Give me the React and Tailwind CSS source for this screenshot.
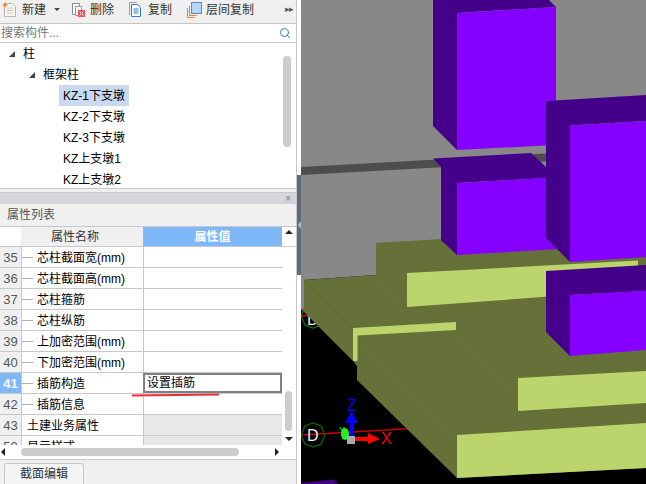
import React from 'react';
import { Search } from 'lucide-react';

const treeItems = ['KZ-1下支墩', 'KZ-2下支墩', 'KZ-3下支墩', 'KZ上支墩1', 'KZ上支墩2'];

const rows = [
  { no: 35, name: '芯柱截面宽(mm)', dash: true },
  { no: 36, name: '芯柱截面高(mm)', dash: true },
  { no: 37, name: '芯柱箍筋', dash: true },
  { no: 38, name: '芯柱纵筋', dash: true },
  { no: 39, name: '上加密范围(mm)', dash: true },
  { no: 40, name: '下加密范围(mm)', dash: true },
  { no: 41, name: '插筋构造', dash: true, active: true, value: '设置插筋' },
  { no: 42, name: '插筋信息', dash: true },
  { no: 43, name: '土建业务属性', muted: true },
  { no: 50, name: '显示样式', muted: true },
];

const NewIcon = () => (
  <svg width="15" height="16" viewBox="0 0 15 16">
    <path d="M2.500 1.500h8l3 3v10h-11z" fill="#f7f6ef" stroke="#b5b5b0" />
    <path d="M5 6h6M5 8.500h6M5 11h6" stroke="#c4c4bd" />
    <path d="M3 0l1 2 2 1-2 1-1 2-1-2-2-1 2-1z" fill="#f08a24" />
  </svg>
);

const DeleteIcon = () => (
  <svg width="15" height="16" viewBox="0 0 15 16">
    <path d="M1.500 1.500h7v11h-7z" fill="#fff" stroke="#8a8a8a" />
    <path d="M4.500 4.500h6v9h-6z" fill="#fff" stroke="#9a9a9a" />
    <rect x="7" y="8" width="7" height="7" fill="#e8505a" />
    <path d="M8.500 9.500l4 4M12.500 9.500l-4 4" stroke="#fff" />
  </svg>
);

const CopyIcon = () => (
  <svg width="15" height="16" viewBox="0 0 15 16">
    <path d="M1.500 13V.5h7" fill="none" stroke="#a0a0a0" />
    <path d="M3.500 2.500h6l3 3v9h-9z" fill="#fff" stroke="#2f7fd0" />
    <path d="M5.500 7h5M5.500 9h5M5.500 11h5" stroke="#2f7fd0" />
  </svg>
);

const LayerIcon = () => (
  <svg width="16" height="16" viewBox="0 0 16 16">
    <path d="M.5 15.500V6M.5 15.500h7" fill="none" stroke="#f08030" />
    <path d="M2.500 13.500V4M2.500 13.500h7" fill="none" stroke="#f08030" />
    <rect x="4.500" y=".5" width="10" height="11" fill="#b9d6f7" stroke="#4a8fd8" />
  </svg>
);

const Triangle = () => (
  <svg width="6" height="6" viewBox="0 0 6 6">
    <polygon points="6,0 6,6 0,6" fill="#444" />
  </svg>
);

const Scene = () => (
  <svg className="shrink-0" width="345" height="484" viewBox="301 0 345 484">
    <rect x="301" y="0" width="345" height="484" fill="#000" />
    <polygon points="301,0 646,0 646,240 376,243 376,275 304,280 304,312 301,309" fill="#888888" />
    <polygon points="301,167 646,148 646,156 301,175" fill="#4d4d4d" />

    {/* grid axes under the model */}
    <path d="M301 435L420 428" stroke="#c80000" strokeWidth="1.500" />
    <path d="M301 316L320 315" stroke="#e00000" strokeWidth="1.500" />
    <polygon points="313,423 321,426 325,435 321,444 313,447 305,444 301,435 305,426" fill="none" stroke="#0b6a0b" strokeWidth="1.200" />
    <text x="307" y="441" fontSize="16" fill="#eeeeee">D</text>
    <polygon points="313,304 321,307 325,316 321,325 313,328 305,325 301,316 305,307" fill="none" stroke="#0b7a0b" strokeWidth="1.200" />
    <text x="307" y="325" fontSize="16" fill="#eeeeee">D</text>

    {/* olive footing */}
    <polygon points="376,243 441,239 646,228 646,468 457,478 357,380 357,366 353,361 304,312 304,280 376,275" fill="#667139" />
    <path d="M304 280L353 329M358 336L457 435M456 330L518 392M376 275L408 307" stroke="#5f6a35" fill="none" />
    <polygon points="407,273 638,260.500 638,290 407,307" fill="#bcd46c" />
    <polygon points="353,328 456,322 456,330 357.500,335.500 357.500,361 353,361" fill="#bcd46c" />
    <polygon points="518,378 646,371 646,403 518,411" fill="#bcd46c" />
    <polygon points="457,435 646,423 646,468 457,478" fill="#bcd46c" />

    {/* back pillar */}
    <polygon points="433,0 549,0 556,7 457,13 457,150 433,126" fill="#440088" />
    <polygon points="457,13 556,7 556,145 457,150" fill="#8500ff" />

    {/* middle pillar */}
    <polygon points="433,158.500 531,153 546,167 546,178 457,183 457,255 441,240 441,167" fill="#440088" />
    <polygon points="457,183 560,177 560,249 457,255" fill="#8500ff" />

    {/* front pillars */}
    <polygon points="546,101 646,95 646,121 570,125.500 570,262 546,238" fill="#440088" />
    <polygon points="570,125.500 646,121 646,257 570,262" fill="#8500ff" />
    <polygon points="546,271 646,265 646,291 570,295 570,356 546,332" fill="#440088" />
    <polygon points="570,295 646,290.500 646,350 570,356" fill="#8500ff" />
    <polygon points="301,483 334,479.500 338,484 301,484" fill="#440088" />

    {/* axis gizmo */}
    <ellipse cx="345" cy="434" rx="4" ry="6" fill="#22ee22" />
    <text x="339" y="433" fontSize="9" fill="#22ee22">Y</text>
    <rect x="350" y="420" width="4" height="18" fill="#0000ff" />
    <polygon points="351.500,411 358,423 345,423" fill="#0000ff" />
    <rect x="354" y="437" width="16" height="4" fill="#ff0000" />
    <polygon points="368,433 380,439 368,444" fill="#ff0000" />
    <rect x="347" y="436" width="8" height="8" fill="#aaaaaa" />
    <text x="347" y="411" fontSize="16" fill="#0000ff">Z</text>
    <text x="381" y="444" fontSize="16" fill="#ff0000">X</text>
  </svg>
);

export default function App() {
  return (
    <div className="flex h-[484px] w-[646px] overflow-hidden text-[12px] text-black [font-family:'Liberation_Sans','Noto_Sans_CJK_SC',sans-serif]">
      <div className="flex w-[297px] shrink-0 flex-col border-r border-[#c8c8c8] bg-[#f0f0f0]">
        <div className="relative flex h-[24px] shrink-0 items-center border-b border-[#c4c4c4] pb-[4px] pl-[2px] text-[#333]">
          <NewIcon />
          <span className="ml-[5px]">新建</span>
          <span className="ml-[8px] h-0 w-0 border-x-[3px] border-t-[3px] border-x-transparent border-t-[#444]" />
          <span className="ml-[11px]"><DeleteIcon /></span>
          <span className="ml-[4px]">删除</span>
          <span className="ml-[14px]"><CopyIcon /></span>
          <span className="ml-[5px]">复制</span>
          <span className="ml-[15px]"><LayerIcon /></span>
          <span className="ml-[3px]">层间复制</span>
          <span className="ml-auto mr-[3px] text-[9px] tracking-[-1px] text-[#555]">▸▸</span>
        </div>

        <div className="flex h-[19px] shrink-0 items-center justify-between border-b border-[#c4c4c4] bg-white pl-[1px] pr-[5px] text-[#777]">
          <span>搜索构件...</span>
          <Search size={12} strokeWidth={2} color="#2a80b9" />
        </div>

        <div className="relative h-[146px] shrink-0 overflow-hidden border-b border-[#c8c8c8] bg-white">
          <div className="flex h-[21px] items-center pl-[9px]">
            <Triangle />
            <span className="ml-[8px]">柱</span>
          </div>
          <div className="flex h-[21px] items-center pl-[29px]">
            <Triangle />
            <span className="ml-[8px]">框架柱</span>
          </div>
          {treeItems.map((item, i) => (
            <div key={item} className="flex h-[21px] items-center pl-[59px]">
              <span className={i === 0 ? 'flex h-[21px] w-[70px] items-center bg-[#c9daf0] pl-[4px]' : 'pl-[4px]'}>{item}</span>
            </div>
          ))}
          <div className="absolute left-[283px] top-[13px] h-[91px] w-[8px] rounded-full bg-[#cdcdcd]" />
        </div>

        <div className="h-[4px] shrink-0 border-b border-[#c8c8c8]" />
        <div className="flex h-[11px] shrink-0 items-center justify-end bg-[#d4d6db] pr-[5px] text-[10px] leading-none text-[#777]">×</div>
        <div className="flex h-[23px] shrink-0 items-center border-b border-[#c8c8c8] pl-[7px] text-[#555]">属性列表</div>

        <div className="flex h-[20px] shrink-0 border-b border-[#c8c8c8] bg-white">
          <div className="w-[21px] shrink-0" />
          <div className="flex w-[122px] shrink-0 items-center bg-[#f0f0f0] pl-[30px] text-[#333]">属性名称</div>
          <div className="flex flex-1 items-center justify-center bg-[#7eb8f8] font-bold text-white">属性值</div>
          <div className="flex w-[14px] shrink-0 justify-center pt-[3px]">
            <span className="h-0 w-0 border-x-[4px] border-b-[4px] border-x-transparent border-b-[#222]" />
          </div>
        </div>

        <div className="relative flex h-[198px] shrink-0 overflow-hidden bg-white">
          <div className="w-[282px] shrink-0">
            {rows.map((row) => (
              <div key={row.no} className="flex h-[21px] border-b border-[#c8c8c8]">
                <div className={row.active
                  ? 'flex w-[21px] shrink-0 items-center justify-center bg-[#7eb8f8] pt-[1px] text-[13px] font-bold text-white'
                  : 'flex w-[21px] shrink-0 items-center justify-center bg-[#f0f0f0] pt-[1px] text-[13px] text-[#555]'}>
                  {row.no}
                </div>
                <div className="flex w-[122px] shrink-0 items-center border-l border-[#c8c8c8] pt-[1px]">
                  {row.dash && <span className="h-px w-[11px] bg-[#b0b0b0]" />}
                  <span className={row.dash ? 'ml-[4px]' : 'ml-[5px]'}>{row.name}</span>
                </div>
                <div className={row.muted
                  ? 'flex-1 border-l border-[#c8c8c8] bg-[#e8e8e8]'
                  : row.active
                    ? 'flex flex-1 items-center border-2 border-[#808080] pl-[2px]'
                    : 'flex-1 border-l border-[#c8c8c8]'}>
                  {row.value}
                </div>
              </div>
            ))}
          </div>
          <div className="relative flex-1">
            <div className="absolute left-[3px] top-[144px] h-[40px] w-[7px] rounded-full bg-[#cdcdcd]" />
            <span className="absolute left-[3px] top-[190px] h-0 w-0 border-x-[4px] border-t-[4px] border-x-transparent border-t-[#222]" />
          </div>
          <div className="absolute left-[132px] top-[147px] h-[2px] w-[87px] -rotate-[0.6deg] bg-[#e8303a]" />
        </div>

        <div className="flex h-[15px] shrink-0 items-center border-b border-[#c8c8c8] bg-white">
          <span className="ml-[1px] h-0 w-0 border-y-[4px] border-r-[4px] border-y-transparent border-r-[#222]" />
          <div className="ml-[16px] h-[8px] w-[218px] rounded-full bg-[#cdcdcd]" />
          <span className="ml-[36px] h-0 w-0 border-y-[4px] border-l-[4px] border-y-transparent border-l-[#222]" />
        </div>

        <div className="flex flex-1 items-end pl-[4px]">
          <div className="flex h-[21px] w-[80px] items-center justify-center rounded-t-[3px] border border-b-0 border-[#c8c8c8] bg-[#f5f5f5] text-[#333]">截面编辑</div>
        </div>
      </div>

      <div className="flex w-[4px] shrink-0 flex-col bg-white">
        <div className="h-[175px]" />
        <div className="flex h-[100px] items-center justify-center bg-[#5f6b78]">
          <span className="h-0 w-0 border-y-[4px] border-r-[3px] border-y-transparent border-r-[#b8c0c8]" />
        </div>
      </div>

      <Scene />
    </div>
  );
}
